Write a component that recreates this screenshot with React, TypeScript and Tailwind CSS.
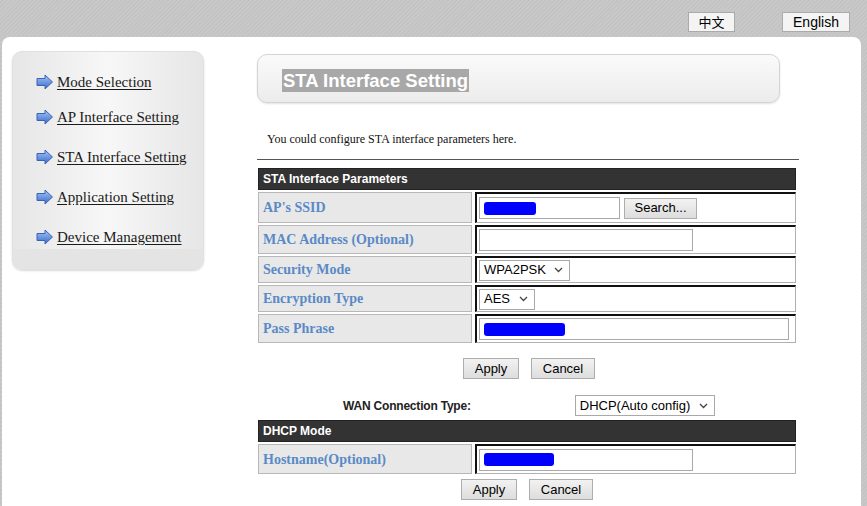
import React from "react";

const serif = { fontFamily: '"Liberation Serif", "Times New Roman", serif' };
const sans = { fontFamily: '"Liberation Sans", Arial, sans-serif' };

function Arrow() {
  return (
    <svg width="18" height="16" viewBox="0 0 18 16" className="shrink-0">
      <defs>
        <linearGradient id="ag" x1="0" y1="0" x2="0" y2="1">
          <stop offset="0" stopColor="#a9c6f5" />
          <stop offset="0.5" stopColor="#6e98e2" />
          <stop offset="1" stopColor="#3d6cc8" />
        </linearGradient>
      </defs>
      <path d="M1 4.5 H9 V1 L16.5 8 L9 15 V11.5 H1 Z" fill="url(#ag)" stroke="#3a63b5" strokeWidth="1" strokeLinejoin="round" />
    </svg>
  );
}

function MenuItem({ label, mt }: { label: string; mt: string }) {
  return (
    <div className={`flex items-center gap-[3px] pl-[23px] ${mt}`}>
      <Arrow />
      <span className="text-[15px] text-[#1a1a1a] underline underline-offset-2 leading-[18px]" style={serif}>
        {label}
      </span>
    </div>
  );
}

function Btn({ children, w }: { children: React.ReactNode; w: string }) {
  return (
    <div
      className={`h-[21px] ${w} flex items-center justify-center border border-[#adadad] bg-gradient-to-b from-[#f2f2f2] to-[#dddddd] text-[13px] text-black`}
      style={sans}
    >
      {children}
    </div>
  );
}

function Chevron() {
  return (
    <svg width="9" height="6" viewBox="0 0 9 6" className="shrink-0">
      <path d="M1 1 L4.5 4.5 L8 1" stroke="#444" strokeWidth="1.3" fill="none" />
    </svg>
  );
}

function Select({ value, w }: { value: string; w: string }) {
  return (
    <div
      className={`h-[21px] ${w} flex items-center justify-between border border-[#a9a9a9] bg-white pl-[4px] pr-[6px] text-[13px] text-black`}
      style={sans}
    >
      <span>{value}</span>
      <Chevron />
    </div>
  );
}

function Redact({ w }: { w: string }) {
  return <div className={`h-[13px] ${w} bg-[#0000ff] rounded-[3px]`} />;
}

function Row({ label, h, children }: { label: string; h: string; children: React.ReactNode }) {
  return (
    <div className={`flex gap-[3px] ${h}`}>
      <div className="w-[214px] shrink-0 bg-[#e8e8e8] border border-[#b8b8b8] flex items-center pl-[4px]">
        <span className="text-[14px] font-bold text-[#5a8ac6]" style={serif}>
          {label}
        </span>
      </div>
      <div className="flex-1 bg-white border-t-2 border-l-2 border-[#111] border-b border-r border-b-[#b0b0b0] border-r-[#b0b0b0] flex items-center pl-[2px] gap-[4px]">
        {children}
      </div>
    </div>
  );
}

function Header({ text }: { text: string }) {
  return (
    <div className="h-[22px] bg-[#333333] border border-[#222] flex items-center pl-[4px]">
      <span className="text-[12px] font-bold text-white" style={sans}>
        {text}
      </span>
    </div>
  );
}

export default function App() {
  return (
    <div className="w-[867px] h-[506px] overflow-hidden bg-[#c5c5c5] bg-[repeating-linear-gradient(135deg,#c9c9c9_0px,#c9c9c9_1px,#c1c1c1_2px,#c6c6c6_3px)] flex flex-col">
      <div className="h-[37px] shrink-0 flex items-start pt-[12px]">
        <div className="ml-[688px] w-[47px] h-[20px] border border-[#aaa] bg-[#f4f4f4] flex items-center justify-center text-[13px] text-black" style={{ fontFamily: '"Noto Sans CJK SC", sans-serif' }}>
          中文
        </div>
        <div className="ml-[47px] w-[68px] h-[20px] border border-[#aaa] bg-[#f4f4f4] flex items-center justify-center text-[14px] text-black" style={sans}>
          English
        </div>
      </div>
      <div className="flex-1 ml-[2px] mr-[6px] bg-white rounded-t-[8px] flex">
        <div className="ml-[10px] mt-[14px] w-[192px] h-[219px] rounded-[10px] bg-gradient-to-r from-[#e6e6e6] via-[#f7f7f7] to-[#e6e6e6] border border-[#e0e0e0] shadow-[0_1px_2px_rgba(0,0,0,0.15)] flex flex-col relative overflow-hidden">
          <MenuItem label="Mode Selection" mt="mt-[21px]" />
          <MenuItem label="AP Interface Setting" mt="mt-[17px]" />
          <MenuItem label="STA Interface Setting" mt="mt-[22px]" />
          <MenuItem label="Application Setting" mt="mt-[22px]" />
          <MenuItem label="Device Management" mt="mt-[22px]" />
          <div className="mt-auto h-[20px] bg-[#e4e4e4]" />
        </div>
        <div className="ml-[53px] w-[542px] flex flex-col">
          <div className="mt-[17px] w-[523px] h-[49px] rounded-[10px] border border-[#d4d4d4] bg-gradient-to-b from-[#fafafa] to-[#ececec] shadow-[0_1px_2px_rgba(0,0,0,0.12)] flex items-center pl-[24px] pt-[3px]">
            <span className="bg-[#a8a8a8] text-white text-[18.5px] font-bold leading-[23px] px-[1px]" style={sans}>
              STA Interface Setting
            </span>
          </div>
          <div className="mt-[28px] pl-[10px] text-[12px] text-[#111] leading-[16px]" style={serif}>
            You could configure STA interface parameters here.
          </div>
          <div className="mt-[12px] h-[1px] bg-[#555]" />
          <div className="mt-[8px] ml-[1px] w-[538px] flex flex-col gap-[2px]">
            <Header text="STA Interface Parameters" />
            <Row label="AP's SSID" h="h-[31px]">
              <div className="w-[141px] h-[22px] border border-[#a9a9a9] flex items-center pl-[4px]">
                <Redact w="w-[52px]" />
              </div>
              <Btn w="w-[73px]">Search...</Btn>
            </Row>
            <Row label="MAC Address (Optional)" h="h-[29px]">
              <div className="w-[214px] h-[22px] border border-[#a9a9a9]" />
            </Row>
            <Row label="Security Mode" h="h-[27px]">
              <Select value="WPA2PSK" w="w-[91px]" />
            </Row>
            <Row label="Encryption Type" h="h-[27px]">
              <Select value="AES" w="w-[56px]" />
            </Row>
            <Row label="Pass Phrase" h="h-[29px]">
              <div className="w-[310px] h-[22px] border border-[#a9a9a9] flex items-center pl-[4px]">
                <Redact w="w-[81px]" />
              </div>
            </Row>
          </div>
          <div className="mt-[15px] flex justify-center gap-[12px] pl-[2px]">
            <Btn w="w-[56px]">Apply</Btn>
            <Btn w="w-[64px]">Cancel</Btn>
          </div>
          <div className="mt-[16px] flex items-center h-[21px]">
            <span className="ml-[86px] text-[12px] font-bold text-[#222] tracking-[-0.2px]" style={sans}>
              WAN Connection Type:
            </span>
            <div className="ml-[104px]">
              <Select value="DHCP(Auto config)" w="w-[140px]" />
            </div>
          </div>
          <div className="mt-[4px] ml-[1px] w-[538px] flex flex-col gap-[2px]">
            <Header text="DHCP Mode" />
            <Row label="Hostname(Optional)" h="h-[30px]">
              <div className="w-[214px] h-[22px] border border-[#a9a9a9] flex items-center pl-[4px]">
                <Redact w="w-[70px]" />
              </div>
            </Row>
          </div>
          <div className="mt-[5px] flex justify-center gap-[12px] pr-[2px]">
            <Btn w="w-[56px]">Apply</Btn>
            <Btn w="w-[64px]">Cancel</Btn>
          </div>
        </div>
      </div>
    </div>
  );
}
